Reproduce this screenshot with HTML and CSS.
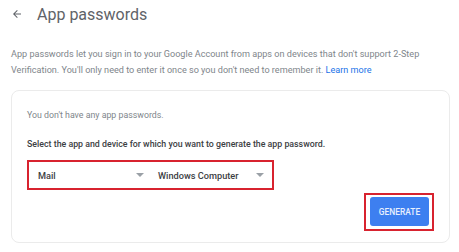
FILE: index.html
```html
<!DOCTYPE html>
<html>
<head>
<meta charset="utf-8">
<link rel="stylesheet" href="styles.css">
</head>
<body>
<div class="page">
  <header class="head">
    <svg class="back" width="12" height="12" viewBox="0 0 24 24"><path d="M20 11H7.83l5.59-5.59L12 4l-8 8 8 8 1.41-1.41L7.83 13H20v-2z" fill="#5f6368"/></svg>
    <h1 class="title">App passwords</h1>
  </header>
  <p class="desc">App passwords let you sign in to your Google Account from apps on devices that don't support 2-Step Verification. You'll only need to enter it once so you don't need to remember it. <a class="link">Learn more</a></p>
  <section class="card">
    <p class="none">You don't have any app passwords.</p>
    <p class="select">Select the app and device for which you want to generate the app password.</p>
    <div class="selects">
      <div class="dd dd-app"><span>Mail</span><span class="caret"></span></div>
      <div class="dd dd-dev"><span>Windows Computer</span><span class="caret"></span></div>
    </div>
    <div class="actions">
      <div class="btnwrap"><button class="btn">GENERATE</button></div>
    </div>
  </section>
</div>
</body>
</html>
```
FILE: styles.css
```css
html, body { margin: 0; padding: 0; background: #fff; }
body { font-family: Roboto, "Noto Sans", "Liberation Sans", sans-serif; width: 459px; height: 252px; overflow: hidden; }
.page { padding: 0 9px 0 11px; }
.head { display: flex; align-items: center; height: 28px; }
.back { margin-right: 14px; }
.title { margin: 0; font-size: 16px; font-weight: 400; color: #5f6368; letter-spacing: 0; }
.desc { margin: 18px 0 0; font-size: 9.1px; line-height: 16px; color: #80868b; }
.link { color: #1a73e8; }
.card { margin-top: 12px; border: 1px solid #ebebeb; border-radius: 8px; height: 153px; box-sizing: border-box; padding: 18px 15px 0 15px; }
.none { margin: 0; font-size: 8.8px; line-height: 12px; color: #80868b; }
.select { margin: 17px 0 0; font-size: 8.8px; line-height: 12px; color: #3c4043; font-weight: 500; }
.selects { display: flex; margin-top: 10px; border: 2px solid #d8232f; width: 247px; height: 30px; box-sizing: border-box; align-items: center; padding-left: 9px; }
.dd { flex: none; display: flex; align-items: center; justify-content: space-between; font-size: 9.2px; color: #3c4043; font-weight: 500; }
.dd-app { width: 106px; margin-right: 14px; }
.dd-dev { width: 106px; }
.caret { width: 0; height: 0; border-left: 4px solid transparent; border-right: 4px solid transparent; border-top: 4px solid #9aa0a6; }
.actions { display: flex; justify-content: flex-end; margin-top: 3px; }
.btnwrap { border: 2px solid #d8232f; padding: 2px 3px 3px 4px; }
.btn { display: block; width: 59px; height: 29px; background: #3d7ff0; color: #e8f0fe; border: none; border-radius: 3px; font-family: Roboto, "Liberation Sans", sans-serif; font-size: 8.4px; font-weight: 500; letter-spacing: 0; padding: 0; }
```
